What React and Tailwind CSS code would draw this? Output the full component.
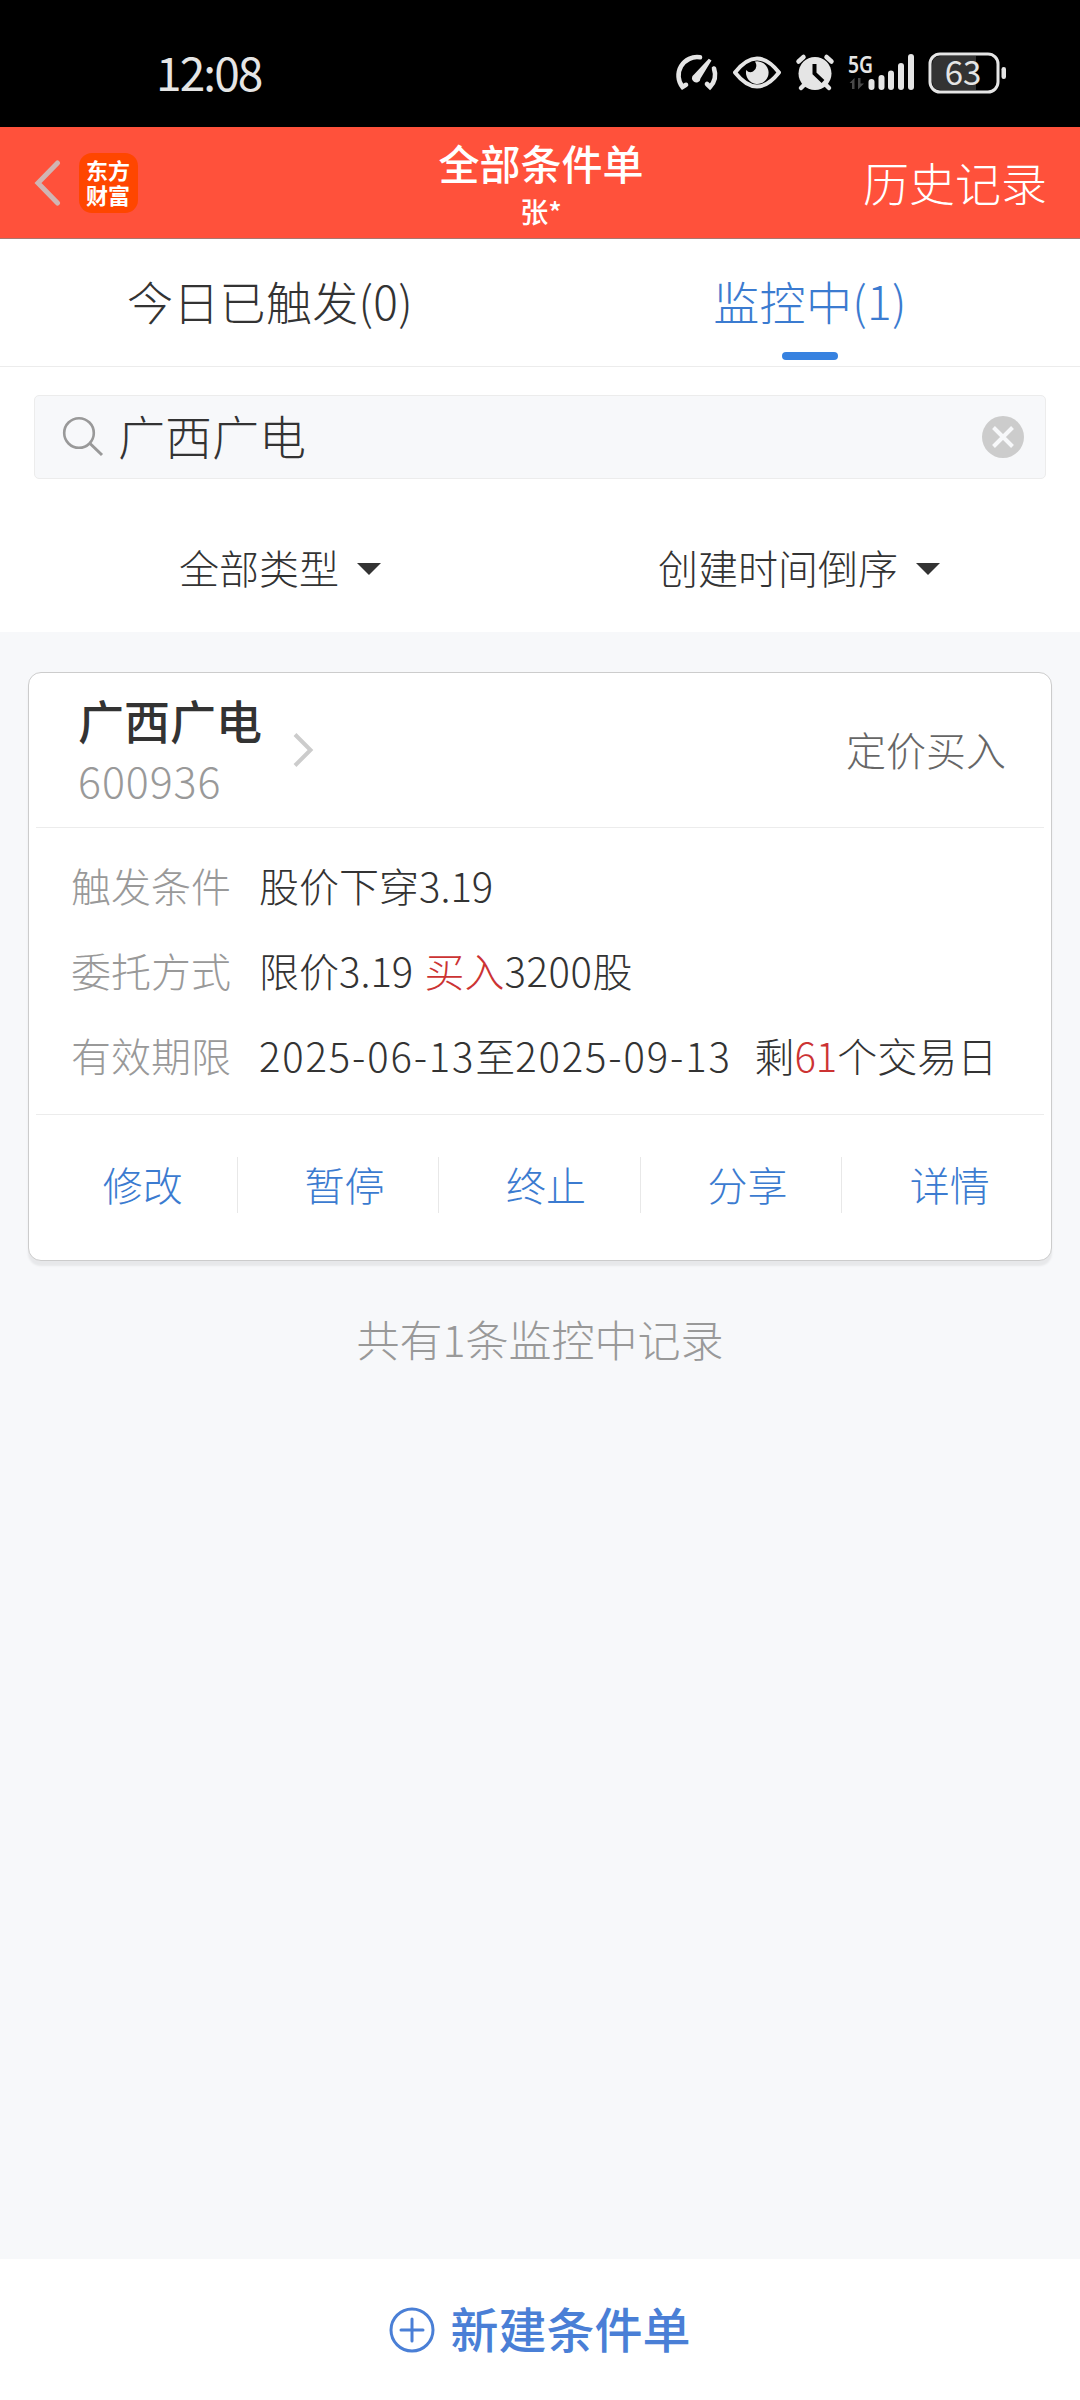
import { useState } from 'react';

const ACTIONS = ['修改', '暂停', '终止', '分享', '详情'];

function StatusIcons() {
  return (
    <svg className="overflow-visible" width="368" height="42" viewBox="0 0 368 42" fill="none">
      {/* speed gauge */}
      <g stroke="#e5e5e5" strokeWidth="4.6" strokeLinecap="round">
        <path d="M24 5.300 A18.500 18.500 0 0 0 6.500 35 L10 32.800" />
        <path d="M38 16.500 A18.500 18.500 0 0 1 34 35 L31 32" />
      </g>
      <path d="M35.500 8.500 L24.500 26.500 A4.300 4.300 0 1 1 18 22.500 L32.800 6.800 Z" fill="#e5e5e5" />
      {/* eye */}
      <path
        d="M59 20.500 Q81 -7.500 103 20.500 Q81 48.500 59 20.500 Z"
        stroke="#e5e5e5"
        strokeWidth="4"
        strokeLinejoin="round"
      />
      <path d="M79 9.600 A11.300 11.300 0 1 1 70.300 18 Q73 21.500 77 19.500 Q82.500 15.500 79 9.600 Z" fill="#e5e5e5" />
      {/* alarm clock */}
      <circle cx="139" cy="21.500" r="16.500" fill="#e5e5e5" />
      <g stroke="#e5e5e5" strokeWidth="4.500" strokeLinecap="round">
        <path d="M122.500 9.500 L127.500 5" />
        <path d="M155.500 9.500 L150.500 5" />
        <path d="M129 32 L125 36" />
        <path d="M149 32 L153 36" />
      </g>
      <path d="M138.500 12 V21.500 L147 29.500" stroke="#000" strokeWidth="4" />
      {/* network */}
      <text
        x="172"
        y="21"
        textLength="25"
        lengthAdjust="spacingAndGlyphs"
        className="fill-[#e5e5e5] font-['Noto_Sans','Noto_Sans_CJK_SC',sans-serif] text-[24px] font-semibold"
      >
        5G
      </text>
      <path d="M173.500 31 L178.500 26 V37 H176 V31 Z M182 26 H184.500 V31.500 H188 L182 37.500 Z" fill="#484848" />
      <g stroke="#e5e5e5" strokeWidth="6" strokeLinecap="round">
        <path d="M195.500 30 V35" />
        <path d="M205.500 26 V35" />
        <path d="M215 21.500 V35" />
        <path d="M225 14 V35" />
        <path d="M235 5 V35" />
      </g>
      {/* battery */}
      <path d="M265 4 H300 V38 H265 Q256 38 256 29 V13 Q256 4 265 4 Z" fill="#333" />
      <rect x="254" y="2" width="68" height="38" rx="10" stroke="#e5e5e5" strokeWidth="3" />
      <rect x="325.500" y="15" width="4.500" height="12" rx="2.200" fill="#e5e5e5" />
      <text
        x="287"
        y="33"
        textAnchor="middle"
        className="fill-[#e5e5e5] font-['Noto_Sans_CJK_SC',sans-serif] text-[33px] font-normal"
      >
        63
      </text>
    </svg>
  );
}

function StatusBar() {
  return (
    <div className="flex h-[127px] justify-between bg-black pl-[156px] pr-[36px] pt-[52px]">
      <span className="h-[42px] text-[46px] font-normal leading-[38px] tracking-[-1.9px] text-[#e5e5e5]">12:08</span>
      <StatusIcons />
    </div>
  );
}

function Header() {
  return (
    <header className="grid h-[112px] grid-cols-3 border-b border-[#a8786f] bg-[#ff513b] text-white">
      <div className="flex items-center pl-[34px]">
        <svg width="27" height="46" viewBox="0 0 27 46" fill="none">
          <path d="M23.500 3 L4 23 L23.500 43" stroke="#d0b5b3" strokeWidth="5" strokeLinecap="round" />
        </svg>
        <div className="ml-[18px] flex h-[60px] w-[59px] items-center justify-center rounded-[13px] bg-[#ff4600]">
          <span className="w-[45px] break-all pb-[2px] text-[22px] font-bold leading-[25px]">东方财富</span>
        </div>
      </div>
      <div className="flex flex-col items-center pl-[2px] pt-[10px]">
        <h1 className="text-[41px] font-medium leading-[50px]">全部条件单</h1>
        <span className="mt-[6px] text-[28px] font-medium leading-[36px]">张*</span>
      </div>
      <div className="flex items-center justify-end pb-[3px] pr-[33px] text-[46px] font-light">历史记录</div>
    </header>
  );
}

function Tabs({ active, onChange }) {
  const tabs = ['今日已触发(0)', '监控中(1)'];
  return (
    <div className="grid h-[128px] grid-cols-2 border-b border-[#ececec] bg-white">
      {tabs.map((tab, i) => (
        <button
          key={tab}
          onClick={() => onChange(i)}
          className={`flex flex-col items-center pt-[31px] text-[46px] font-light tracking-[0.3px] ${
            active === i ? 'text-[#3b7bd0]' : 'text-[#333]'
          }`}
        >
          <span className="h-[60px] leading-[60px]">{tab}</span>
          {active === i && <span className="mt-[22px] h-[8px] w-[56px] rounded-full bg-[#3782e0]" />}
        </button>
      ))}
    </div>
  );
}

function SearchBox({ value }) {
  return (
    <div className="flex h-[84px] items-center rounded-[5px] border border-[#ececec] bg-[#f7f8fa] pl-[27px] pr-[21px]">
      <svg width="42" height="42" viewBox="0 0 42 42" fill="none" stroke="#999" strokeWidth="2.600">
        <circle cx="17" cy="17" r="14.800" />
        <path d="M27.500 27 L40 39" strokeWidth="3" />
      </svg>
      <span className="ml-[14px] flex-1 pb-[4px] text-[47px] font-light leading-[60px] text-[#333]">{value}</span>
      <svg width="42" height="42" viewBox="0 0 42 42" fill="none">
        <circle cx="21" cy="21" r="21" fill="#ccc" />
        <path d="M11.500 11.500 L30.500 30.500 M30.500 11.500 L11.500 30.500" stroke="#f7f8fa" strokeWidth="4" />
      </svg>
    </div>
  );
}

function Filter({ label }) {
  return (
    <div className="flex items-center justify-center gap-[18px] text-[40px] font-light text-[#333]">
      <span className="pb-[4px]">{label}</span>
      <svg width="24" height="12" viewBox="0 0 24 12">
        <path d="M0 0 H24 L12 12 Z" fill="#333" />
      </svg>
    </div>
  );
}

function Row({ label, children }) {
  return (
    <div className="flex h-[85px] items-center text-[40px] font-light">
      <span className="w-[188px] text-[#999]">{label}</span>
      <span className="whitespace-pre text-[#333] [word-spacing:2.5px]">{children}</span>
    </div>
  );
}

function OrderCard() {
  return (
    <div className="mx-[28px] mt-[40px] h-[589px] rounded-[13px] border border-[#ccc] bg-white px-[7px] shadow-[0_5px_2px_#e7e8ea]">
      <div className="flex h-[155px] items-center justify-between border-b border-[#ececec] pl-[42px] pr-[38px]">
        <div className="flex items-center">
          <div className="flex flex-col pb-[3px]">
            <span className="text-[46px] font-medium leading-[60px] text-[#333]">广西广电</span>
            <span className="text-[43px] font-light leading-[60px] tracking-[0.9px] text-[#999]">600936</span>
          </div>
          <svg className="ml-[30px]" width="22" height="36" viewBox="0 0 22 36" fill="none">
            <path d="M3 2.500 L18.500 18 L3 33.500" stroke="#ccc" strokeWidth="4" />
          </svg>
        </div>
        <span className="pb-[3px] text-[40px] font-light text-[#666]">定价买入</span>
      </div>

      <div className="h-[287px] border-b border-[#ececec] pl-[35px] pt-[14px]">
        <Row label="触发条件">股价下穿3.19</Row>
        <Row label="委托方式">
          限价3.19 <span className="text-[#cc3333]">买入</span>
          <span className="tracking-[0.6px]">3200</span>股
        </Row>
        <Row label="有效期限">
          <span className="tracking-[1.85px]">2025-06-13</span>至<span className="tracking-[1.85px]">2025-09-13</span>
          {'  '}剩<span className="text-[#cc3333]">61</span>个交易日
        </Row>
      </div>

      <div className="mt-[42px] grid h-[56px] grid-cols-5 divide-x divide-[#e8e8e8]">
        {ACTIONS.map((name) => (
          <button
            key={name}
            className="flex items-center justify-center pb-[2px] pl-[13px] text-[40px] font-light leading-[54px] text-[#3b7bd0]"
          >
            {name}
          </button>
        ))}
      </div>
    </div>
  );
}

export default function App() {
  const [tab, setTab] = useState(1);

  return (
    <div className="flex h-[2400px] w-[1080px] flex-col overflow-hidden bg-[#f7f8fa] font-['Noto_Sans_CJK_SC',sans-serif]">
      <StatusBar />
      <Header />
      <Tabs active={tab} onChange={setTab} />

      <div className="h-[265px] bg-white px-[34px] pt-[28px]">
        <SearchBox value="广西广电" />
        <div className="mt-[60px] flex h-[60px] justify-between pl-[145px] pr-[106px]">
          <Filter label="全部类型" />
          <Filter label="创建时间倒序" />
        </div>
      </div>

      <main className="flex-1">
        <OrderCard />
        <p className="mt-[47px] text-center text-[43px] font-light leading-[60px] text-[#999]">共有1条监控中记录</p>
      </main>

      <footer className="flex h-[141px] items-center justify-center gap-[15px] bg-white text-[48px] font-medium text-[#4a7fd6]">
        <svg width="46" height="46" viewBox="0 0 46 46" fill="none" stroke="#4a7fd6" strokeWidth="3">
          <circle cx="23" cy="23" r="21" />
          <path d="M12 23 H34 M23 12 V34" strokeLinecap="round" />
        </svg>
        <span className="pb-[6px]">新建条件单</span>
      </footer>
    </div>
  );
}
